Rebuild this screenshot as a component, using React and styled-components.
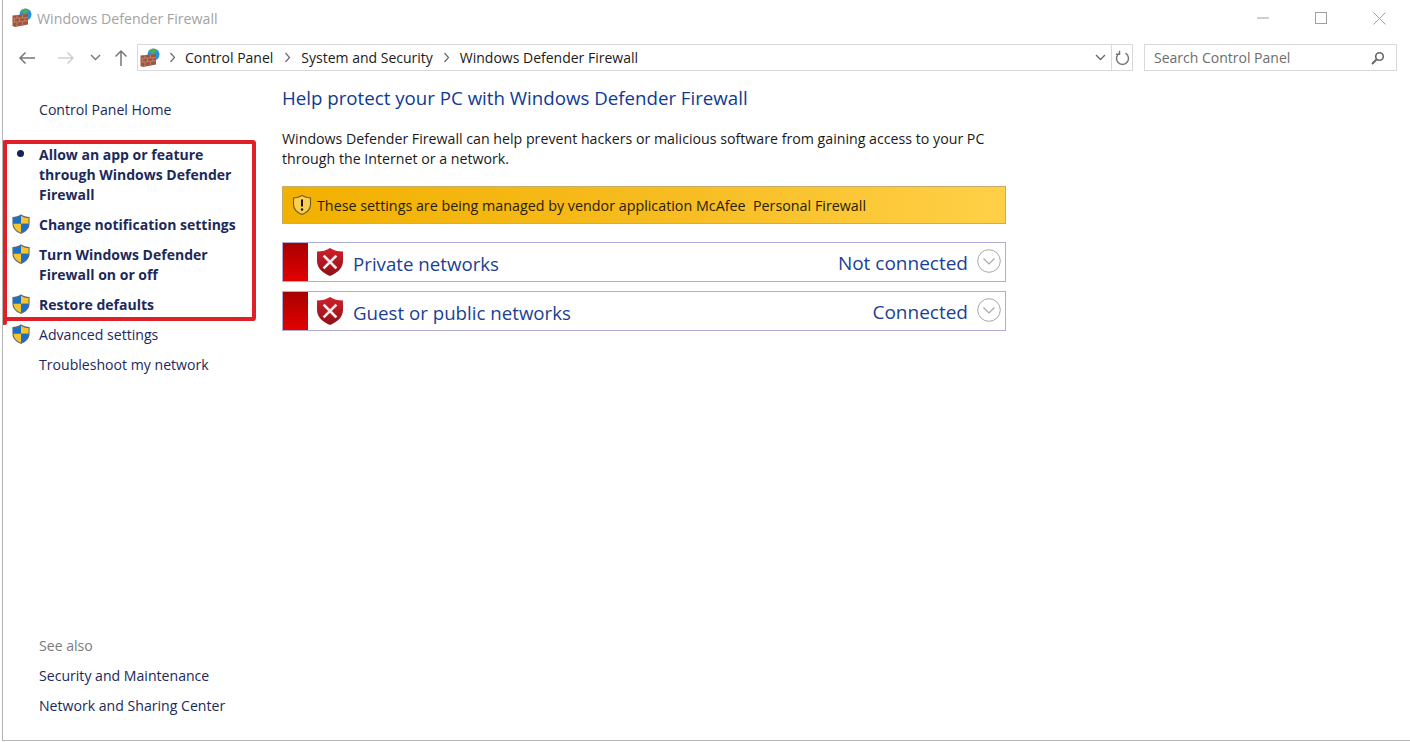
import React from "react";
import styled, { createGlobalStyle } from "styled-components";

const Global = createGlobalStyle`
  html, body { margin: 0; padding: 0; background: #fff; }
  body { font-family: "Open Sans", "Noto Sans", "Liberation Sans", sans-serif; }
`;

const Win = styled.div`
  position: relative;
  box-sizing: border-box;
  width: 1408px;
  height: 741px;
  margin-left: 2px;
  border-left: 1px solid #b4b4b4;
  border-bottom: 1px solid #b4b4b4;
  display: flex;
  flex-direction: column;
  background: #fff;
  overflow: hidden;
`;

const TitleBar = styled.div`
  height: 36px;
  flex: none;
  display: flex;
  align-items: center;
  padding: 0 24px 0 9px;
  gap: 5px;
`;
const TitleText = styled.div`
  flex: 1;
  font-size: 14.2px;
  color: #a3a3a3;
`;
const Caption = styled.div`
  display: flex;
  align-items: center;
  gap: 46px;
`;

const Toolbar = styled.div`
  height: 27px;
  margin-top: 8px;
  flex: none;
  display: flex;
  align-items: center;
  padding: 0 13px 0 12px;
`;
const NavButtons = styled.div`
  width: 122px;
  display: flex;
  align-items: center;
`;
const NavSlot = styled.div`
  width: ${(p) => p.$w}px;
  margin-left: ${(p) => p.$ml || 0}px;
  display: flex;
  justify-content: center;
`;
const Address = styled.div`
  flex: 1;
  height: 27px;
  box-sizing: border-box;
  border: 1px solid #d9d9d9;
  display: flex;
  align-items: center;
  padding-left: 2px;
  font-size: 14px;
  color: #1a1a1a;
`;
const Crumb = styled.span`
  white-space: nowrap;
`;
const CrumbSep = styled.div`
  width: ${(p) => p.$w}px;
  display: flex;
  justify-content: center;
`;
const AddressEnd = styled.div`
  margin-left: auto;
  display: flex;
  align-items: center;
  height: 100%;
`;
const DropSlot = styled.div`
  width: 21px;
  height: 100%;
  display: flex;
  align-items: center;
  justify-content: center;
  border-right: 1px solid #d9d9d9;
`;
const RefreshSlot = styled.div`
  width: 20px;
  display: flex;
  justify-content: center;
`;
const Search = styled.div`
  width: 253px;
  height: 27px;
  box-sizing: border-box;
  margin-left: 11px;
  border: 1px solid #d9d9d9;
  display: flex;
  align-items: center;
  justify-content: space-between;
  padding: 0 11px 0 9px;
  font-size: 14px;
  color: #6d6d6d;
`;

const Body = styled.div`
  flex: 1;
  display: flex;
  min-height: 0;
`;
const Side = styled.nav`
  width: 279px;
  flex: none;
  box-sizing: border-box;
  padding: 29px 0 24px 9px;
  display: flex;
  flex-direction: column;
`;
const SideGroup = styled.div`
  display: flex;
  flex-direction: column;
  gap: 10px;
`;
const TopGroup = styled(SideGroup)`
  margin-top: 25px;
`;
const BottomGroup = styled(SideGroup)`
  margin-top: auto;
`;
const SideRow = styled.div`
  display: flex;
  align-items: flex-start;
  font-size: ${(p) => (p.$bold ? 14 : 14.1)}px;
  line-height: 20px;
  color: ${(p) => (p.$muted ? "#7b7b7b" : "#1b2a5b")};
  font-weight: ${(p) => (p.$bold ? 700 : 400)};
`;
const Marker = styled.div`
  width: 27px;
  flex: none;
  height: 20px;
`;
const Dot = styled.div`
  width: 7px;
  height: 7px;
  margin: 5px 0 0 5px;
  border-radius: 50%;
  background: #14215a;
`;
const RowText = styled.div`
  width: 205px;
`;
const UacSvg = styled.svg`
  display: block;
  margin-top: -1px;
`;

const Main = styled.main`
  width: 724px;
  padding-top: 14px;
`;
const Heading = styled.h1`
  margin: 0;
  font-size: 18.7px;
  line-height: 26px;
  font-weight: 400;
  color: #0f3a94;
`;
const Para = styled.p`
  margin: 18px 0 0;
  font-size: 14.2px;
  line-height: 20px;
  color: #1a1a1a;
`;
const Banner = styled.div`
  margin-top: 17px;
  height: 38px;
  box-sizing: border-box;
  border: 1px solid #c9ab6a;
  background: linear-gradient(90deg, #f2b100 0%, #f6bb1e 50%, #ffd047 100%);
  display: flex;
  align-items: center;
  padding-left: 9px;
  gap: 5px;
  font-size: 14.3px;
  color: #2a1d00;
`;
const NetList = styled.div`
  margin-top: 18px;
  display: flex;
  flex-direction: column;
  gap: 9px;
`;
const NetRow = styled.div`
  height: 40px;
  box-sizing: border-box;
  border: 1px solid #aeaed2;
  display: flex;
  align-items: center;
`;
const RedBlock = styled.div`
  width: 25px;
  align-self: stretch;
  flex: none;
  background: linear-gradient(180deg, #a80000 0%, #e30000 100%);
`;
const NetShield = styled.div`
  margin-left: 8px;
  width: 28px;
  height: 30px;
  flex: none;
`;
const NetName = styled.div`
  margin-left: 9px;
  margin-top: 3px;
  font-size: 18.7px;
  color: #1b3f94;
`;
const NetStatus = styled.div`
  margin-left: auto;
  font-size: 19px;
  color: #1b3f94;
  margin-top: 1px;
`;
const Chevron = styled.div`
  width: 24px;
  height: 24px;
  margin: -2px 4px 0 9px;
  flex: none;
`;

const Highlight = styled.div`
  position: absolute;
  left: -1px;
  top: 140px;
  width: 254px;
  height: 181px;
  box-sizing: border-box;
  border: 4px solid #e02027;
  border-left-width: 5px;
  border-radius: 3px;
  pointer-events: none;
  &::after {
    content: "";
    position: absolute;
    left: -5px;
    bottom: -8px;
    width: 5px;
    height: 8px;
    border-radius: 0 0 3px 3px;
    background: #e02027;
  }
`;

const Uac = () => (
  <UacSvg width="18" height="20" viewBox="1 .5 18 20">
    <path d="M10 .8C7.5 2.6 4.6 3.4 1.4 3.5V10c0 5 3.4 8.5 8.6 10.4 5.2-1.900 8.600-5.400 8.600-10.400V3.500C15.400 3.400 12.500 2.600 10 .8z" fill="#5d6b78" />
    <path d="M10 2.200v8H2.500V4.600C5.300 4.500 7.800 3.700 10 2.200z" fill="#1d6fc4" />
    <path d="M10 2.200c2.200 1.500 4.700 2.300 7.500 2.400v5.600H10z" fill="#f7c52b" />
    <path d="M2.500 10.200H10v9C5.600 17.500 2.700 14.500 2.500 10.200z" fill="#f7c52b" />
    <path d="M10 10.200h7.500c-.2 4.300-3.100 7.300-7.500 9z" fill="#1d6fc4" />
  </UacSvg>
);

const FirewallIcon = () => (
  <svg width="20" height="20" viewBox="0 0 20 20">
    <circle cx="13.500" cy="6.500" r="6" fill="#2a8fd8" />
    <path d="M10 1.800c2-1.500 5-1.200 6.500.5.400 1.500-2 1.600-2.400 3-.5 1.600-2.600.6-3.600-.5z" fill="#4fb04a" />
    <path d="M.5 7.500L16 6v10.500L3 19 .5 18z" fill="#a0553f" />
    <path d="M.5 10.800L16 9.300M.5 14.300L16 12.800M5 7.200v3.300M10.500 6.600v3.200M2.500 10.800v3.300M7.500 10.300v3.300M13 9.700v3.300M5 14.100v4.500M10.500 13.500v4" stroke="#c68f78" strokeWidth=".7" fill="none" />
  </svg>
);

const RedShield = () => (
  <svg width="28" height="30" viewBox="0 0 28 30">
    <defs>
      <linearGradient id="rs" x1="0" y1="0" x2="0" y2="1">
        <stop offset="0" stopColor="#d0212b" />
        <stop offset="1" stopColor="#8f0f18" />
      </linearGradient>
    </defs>
    <path d="M14 1C10.500 3.400 6 4.500 1 4.600V14c0 7 5.500 11.800 13 15 7.500-3.200 13-8 13-15V4.600C22 4.500 17.500 3.400 14 1z" fill="url(#rs)" />
    <path d="M8.500 9.500l11 11M19.500 9.500l-11 11" stroke="#f6e9e9" strokeWidth="2.600" strokeLinecap="square" />
  </svg>
);

const WarnShield = () => (
  <svg width="20" height="22" viewBox="0 0 20 22">
    <path d="M10 1.500C7.500 3 5 3.800 1.500 4v6.500c0 4.800 3.500 8 8.500 10 5-2 8.500-5.200 8.500-10V4C15 3.800 12.500 3 10 1.500z" fill="#f9cf52" stroke="#6d5a24" strokeWidth="1.100" />
    <path d="M10 5.500v7" stroke="#1c1400" strokeWidth="2" />
    <circle cx="10" cy="15.500" r="1.200" fill="#1c1400" />
  </svg>
);

const ChevronCircle = () => (
  <svg width="24" height="24" viewBox="0 0 24 24">
    <circle cx="12" cy="12" r="11.300" fill="#fff" stroke="#a8a8a8" />
    <path d="M6.500 9.500l5.500 5.500 5.500-5.500" fill="none" stroke="#a8a8a8" strokeWidth="1.200" />
  </svg>
);

const ArrowLeft = ({ color }) => (
  <svg width="18" height="14" viewBox="0 0 18 14">
    <path d="M17 7H2M7.500 1.500L2 7l5.500 5.500" fill="none" stroke={color} strokeWidth="1.500" />
  </svg>
);
const ArrowRight = ({ color }) => (
  <svg width="18" height="14" viewBox="0 0 18 14">
    <path d="M1 7h15M10.500 1.500L16 7l-5.500 5.500" fill="none" stroke={color} strokeWidth="1.500" />
  </svg>
);

const SmallChevron = ({ color = "#6a6a6a" }) => (
  <svg width="11" height="7" viewBox="0 0 11 7">
    <path d="M1 1l4.500 4.500L10 1" fill="none" stroke={color} strokeWidth="1.400" />
  </svg>
);

const Sep = () => (
  <svg width="7" height="11" viewBox="0 0 7 11">
    <path d="M1.500 1l4 4.500-4 4.500" fill="none" stroke="#6a6a6a" strokeWidth="1.200" />
  </svg>
);

const sideTop = [
  { t: "Allow an app or feature through Windows Defender Firewall", b: 1, m: "dot" },
  { t: "Change notification settings", b: 1, m: "uac" },
  { t: "Turn Windows Defender Firewall on or off", b: 1, m: "uac" },
  { t: "Restore defaults", b: 1, m: "uac" },
  { t: "Advanced settings", m: "uac" },
  { t: "Troubleshoot my network" },
];

const nets = [
  { n: "Private networks", s: "Not connected" },
  { n: "Guest or public networks", s: "Connected" },
];

export default function App() {
  return (
    <Win>
      <Global />
      <TitleBar>
        <FirewallIcon />
        <TitleText>Windows Defender Firewall</TitleText>
        <Caption>
          <svg width="12" height="2" viewBox="0 0 12 2"><path d="M0 1h12" stroke="#a0a0a0" /></svg>
          <svg width="12" height="12" viewBox="0 0 12 12"><rect x=".5" y=".5" width="11" height="11" fill="none" stroke="#a0a0a0" /></svg>
          <svg width="13" height="13" viewBox="0 0 13 13"><path d="M.5.500l12 12M12.500.500l-12 12" stroke="#a0a0a0" /></svg>
        </Caption>
      </TitleBar>
      <Toolbar>
        <NavButtons>
          <NavSlot $w={24}><ArrowLeft color="#777" /></NavSlot>
          <NavSlot $w={38} $ml={8}><ArrowRight color="#cfcfcf" /></NavSlot>
          <NavSlot $w={20}><SmallChevron color="#777" /></NavSlot>
          <NavSlot $w={32}>
            <svg width="14" height="17" viewBox="0 0 14 17"><path d="M7 17V2M1.500 7.500L7 2l5.500 5.500" fill="none" stroke="#777" strokeWidth="1.500" /></svg>
          </NavSlot>
        </NavButtons>
        <Address>
          <FirewallIcon />
          <CrumbSep $w={25}><Sep /></CrumbSep>
          <Crumb>Control Panel</Crumb>
          <CrumbSep $w={28}><Sep /></CrumbSep>
          <Crumb>System and Security</Crumb>
          <CrumbSep $w={27}><Sep /></CrumbSep>
          <Crumb>Windows Defender Firewall</Crumb>
          <AddressEnd>
            <DropSlot><SmallChevron /></DropSlot>
            <RefreshSlot>
              <svg width="15" height="16" viewBox="0 0 15 16"><path d="M4.500 3.200a6 6 0 1 0 6 0M4.500 .800v3.500H1" fill="none" stroke="#777" strokeWidth="1.500" /></svg>
            </RefreshSlot>
          </AddressEnd>
        </Address>
        <Search>
          Search Control Panel
          <svg width="14" height="14" viewBox="0 0 14 14"><circle cx="8.500" cy="5.500" r="3.800" fill="none" stroke="#666" strokeWidth="1.600" /><path d="M5.500 8.500L1 13" stroke="#666" strokeWidth="2" /></svg>
        </Search>
      </Toolbar>
      <Body>
        <Side>
          <SideRow><Marker />Control Panel Home</SideRow>
          <TopGroup>
            {sideTop.map((r) => (
              <SideRow key={r.t} $bold={r.b}>
                <Marker>{r.m === "dot" ? <Dot /> : r.m === "uac" ? <Uac /> : null}</Marker>
                <RowText>{r.t}</RowText>
              </SideRow>
            ))}
          </TopGroup>
          <BottomGroup>
            <SideRow $muted><Marker />See also</SideRow>
            <SideRow><Marker />Security and Maintenance</SideRow>
            <SideRow><Marker />Network and Sharing Center</SideRow>
          </BottomGroup>
        </Side>
        <Main>
          <Heading>Help protect your PC with Windows Defender Firewall</Heading>
          <Para>
            Windows Defender Firewall can help prevent hackers or malicious software from gaining access to your PC
            <br />
            through the Internet or a network.
          </Para>
          <Banner>
            <WarnShield />
            These settings are being managed by vendor application McAfee&nbsp; Personal Firewall
          </Banner>
          <NetList>
            {nets.map((n) => (
              <NetRow key={n.n}>
                <RedBlock />
                <NetShield><RedShield /></NetShield>
                <NetName>{n.n}</NetName>
                <NetStatus>{n.s}</NetStatus>
                <Chevron><ChevronCircle /></Chevron>
              </NetRow>
            ))}
          </NetList>
        </Main>
      </Body>
      <Highlight />
    </Win>
  );
}
